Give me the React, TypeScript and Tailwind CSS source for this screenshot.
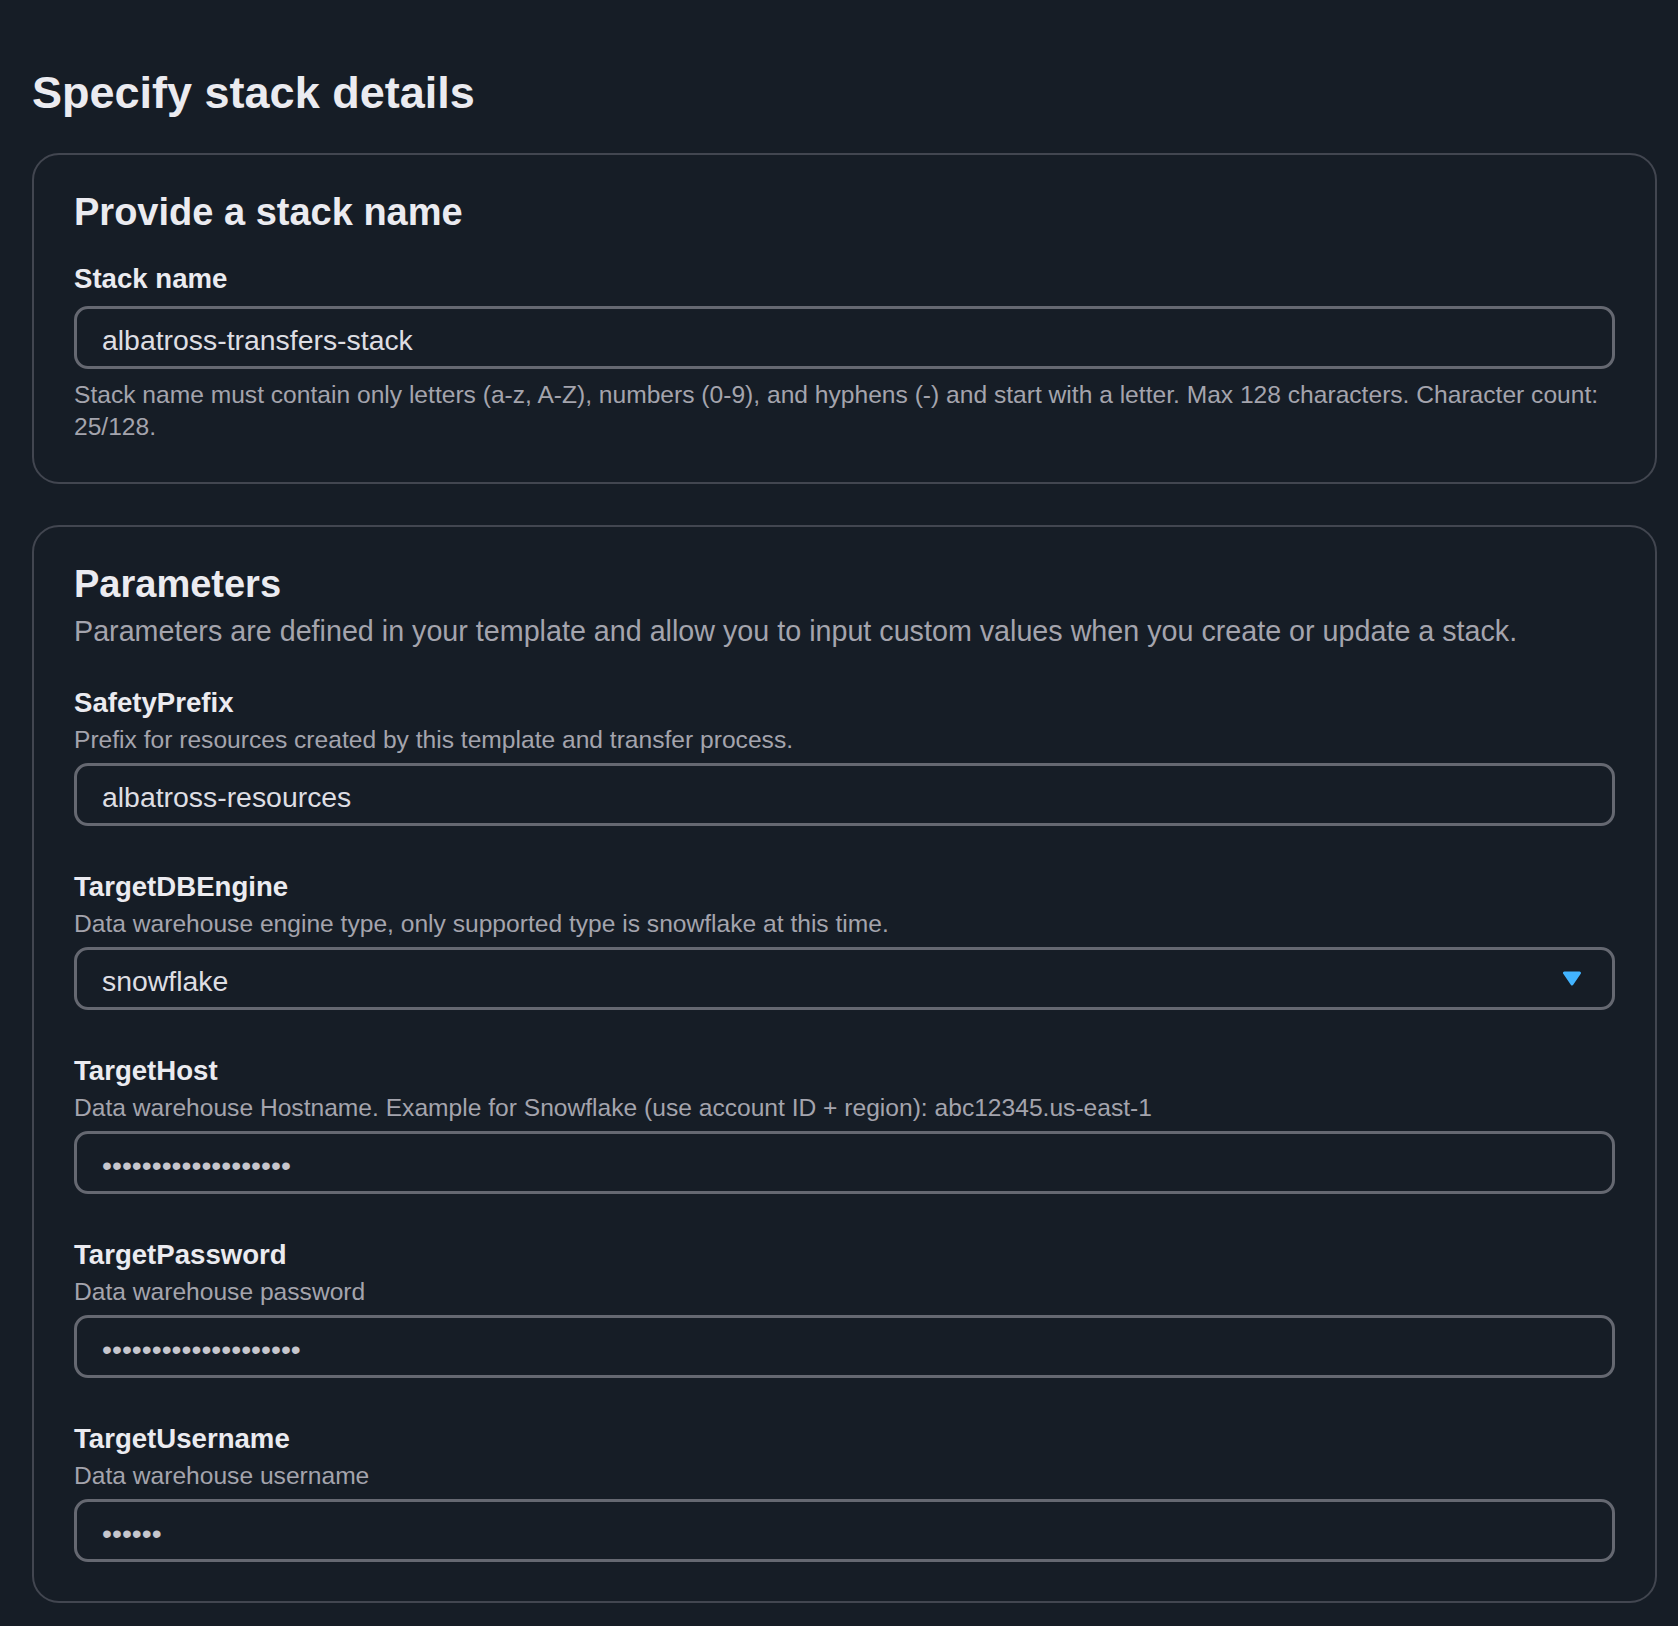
import type { ReactNode } from "react";

const font = { fontFamily: '"Liberation Sans", Arial, sans-serif' };

interface FieldProps {
  label: string;
  description?: string;
  children: ReactNode;
}

function Field({ label, description, children }: FieldProps) {
  return (
    <div className="flex flex-col">
      <div className="text-[27.6px] leading-[36px] font-bold text-[#ebebf0]">{label}</div>
      {description && (
        <div className="mt-[3px] text-[24.6px] leading-[32px] text-[#a4a4ad]">{description}</div>
      )}
      <div className={description ? "mt-[7px]" : "mt-[9px]"}>{children}</div>
    </div>
  );
}

function TextBox({ value, dots = false }: { value: string; dots?: boolean }) {
  return (
    <div className="h-[63px] flex items-center rounded-[14px] border-[3px] border-[#656871] px-[25px]">
      <span
        className={
          dots
            ? "mt-[4px] text-[28.4px] leading-[32px] text-[#c6c6cd]"
            : "mt-[4px] text-[28.4px] leading-[32px] text-[#dedee3]"
        }
      >
        {value}
      </span>
    </div>
  );
}

function SelectBox({ value }: { value: string }) {
  return (
    <div className="h-[63px] flex items-center justify-between rounded-[14px] border-[3px] border-[#656871] pl-[25px] pr-[30px]">
      <span className="mt-[4px] text-[28.4px] leading-[32px] text-[#dedee3]">{value}</span>
      <svg width="20" height="15" viewBox="0 0 20 15" aria-hidden="true">
        <polygon
          points="2.5,2 17.5,2 10,13"
          fill="#42b4ff"
          stroke="#42b4ff"
          strokeWidth="3"
          strokeLinejoin="round"
        />
      </svg>
    </div>
  );
}

const bullet = (n: number) => "\u2022".repeat(n);

export default function App() {
  return (
    <div className="min-h-screen bg-[#161d26] pl-[32px] pr-[21px] pt-[67px] pb-[24px]" style={font}>
      <h1 className="text-[45px] leading-[52px] font-bold text-[#ebebf0]">Specify stack details</h1>

      {/* Stack name */}
      <section className="mt-[34px] rounded-[27px] border-2 border-[#424650] px-[40px] pt-[35px] pb-[39px]">
        <h2 className="text-[38px] leading-[44px] font-bold text-[#ebebf0]">Provide a stack name</h2>
        <div className="mt-[27px]">
          <Field label="Stack name">
            <TextBox value="albatross-transfers-stack" />
          </Field>
          <p className="mt-[10px] whitespace-nowrap text-[24.6px] leading-[32px] text-[#a4a4ad]">
            Stack name must contain only letters (a-z, A-Z), numbers (0-9), and hyphens (-) and start with a
            letter. Max 128 characters. Character count:
            <br />
            25/128.
          </p>
        </div>
      </section>

      {/* Parameters */}
      <section className="mt-[41px] rounded-[27px] border-2 border-[#424650] px-[40px] pt-[35px] pb-[39px]">
        <h2 className="text-[38px] leading-[44px] font-bold text-[#ebebf0]">Parameters</h2>
        <p className="mt-[7px] text-[28.7px] leading-[36px] text-[#a4a4ad]">
          Parameters are defined in your template and allow you to input custom values when you create or update
          a stack.
        </p>
        <div className="mt-[36px] flex flex-col gap-[43px]">
          <Field label="SafetyPrefix" description="Prefix for resources created by this template and transfer process.">
            <TextBox value="albatross-resources" />
          </Field>
          <Field
            label="TargetDBEngine"
            description="Data warehouse engine type, only supported type is snowflake at this time."
          >
            <SelectBox value="snowflake" />
          </Field>
          <Field
            label="TargetHost"
            description="Data warehouse Hostname. Example for Snowflake (use account ID + region): abc12345.us-east-1"
          >
            <TextBox value={bullet(19)} dots />
          </Field>
          <Field label="TargetPassword" description="Data warehouse password">
            <TextBox value={bullet(20)} dots />
          </Field>
          <Field label="TargetUsername" description="Data warehouse username">
            <TextBox value={bullet(6)} dots />
          </Field>
        </div>
      </section>
    </div>
  );
}
